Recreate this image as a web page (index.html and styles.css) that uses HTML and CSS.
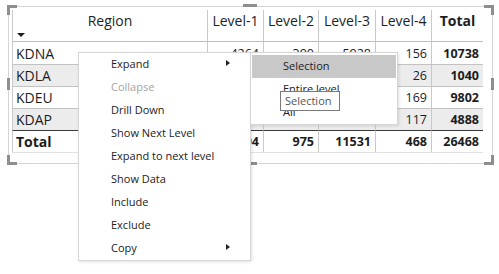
FILE: index.html
```html
<!DOCTYPE html>
<html>
<head>
<meta charset="utf-8">
<link rel="stylesheet" href="styles.css">
</head>
<body>
<div class="stage">
  <div class="visual">
    <div class="matrix">
      <div class="hc first region-h"><span class="h-text">Region</span><span class="sort"></span></div>
      <div class="hc">Level-1</div>
      <div class="hc">Level-2</div>
      <div class="hc">Level-3</div>
      <div class="hc">Level-4</div>
      <div class="hc last bold">Total</div>

      <div class="c first lbl r1">KDNA</div>
      <div class="c num r1">4264</div>
      <div class="c num r1">390</div>
      <div class="c num r1">5928</div>
      <div class="c num r1">156</div>
      <div class="c num last bold r1">10738</div>

      <div class="c first lbl alt">KDLA</div>
      <div class="c num alt">520</div>
      <div class="c num alt">84</div>
      <div class="c num alt">410</div>
      <div class="c num alt">26</div>
      <div class="c num last bold alt">1040</div>

      <div class="c first lbl">KDEU</div>
      <div class="c num">5412</div>
      <div class="c num">301</div>
      <div class="c num">3920</div>
      <div class="c num">169</div>
      <div class="c num last bold">9802</div>

      <div class="c first lbl alt r4">KDAP</div>
      <div class="c num alt r4">3298</div>
      <div class="c num alt r4">200</div>
      <div class="c num alt r4">1273</div>
      <div class="c num alt r4">117</div>
      <div class="c num last bold alt r4">4888</div>

      <div class="c first lbl tot bold">Total</div>
      <div class="c num tot bold">13494</div>
      <div class="c num tot bold">975</div>
      <div class="c num tot bold">11531</div>
      <div class="c num tot bold">468</div>
      <div class="c num last tot bold">26468</div>
    </div>

    <span class="handle h-tl"></span>
    <span class="handle h-tr"></span>
    <span class="handle h-bl"></span>
    <span class="handle h-br"></span>
    <span class="handle h-tm"></span>
    <span class="handle h-bm"></span>
    <span class="handle h-lm"></span>
    <span class="handle h-rm"></span>
  </div>

  <div class="menu">
    <div class="mi">Expand<span class="arrow"></span></div>
    <div class="mi disabled">Collapse</div>
    <div class="mi">Drill Down</div>
    <div class="mi">Show Next Level</div>
    <div class="mi">Expand to next level</div>
    <div class="mi">Show Data</div>
    <div class="mi">Include</div>
    <div class="mi">Exclude</div>
    <div class="mi">Copy<span class="arrow"></span></div>
  </div>

  <div class="submenu">
    <div class="mi sel">Selection</div>
    <div class="mi">Entire level</div>
    <div class="mi">All</div>
  </div>

  <div class="tooltip">Selection</div>
</div>
</body>
</html>
```

FILE: styles.css
```css
html, body {
  margin: 0;
  padding: 0;
  background: #ffffff;
}

body {
  font-family: "Open Sans", "Noto Sans", sans-serif;
  color: #1c1c1c;
}

.stage {
  position: relative;
  width: 499px;
  height: 274px;
  overflow: hidden;
}

.visual {
  position: relative;
  box-sizing: border-box;
  margin: 6px 0 0 8px;
  width: 485px;
  height: 158px;
  border: 1px solid #d5d5d5;
  padding: 3px 0 0 3px;
}

.matrix {
  display: grid;
  grid-template-columns: 196px 56px 55px 57px 56px 51px;
}

.hc {
  box-sizing: border-box;
  height: 32px;
  border-right: 1px solid #c9c9c9;
  border-bottom: 1px solid #95d0c8;
  font-size: 14px;
  line-height: 20px;
  text-align: center;
  padding-top: 1px;
  color: #1e1e1e;
}

.region-h {
  display: flex;
  flex-direction: column;
}

.h-text {
  display: block;
  text-align: center;
}

.sort {
  display: block;
  width: 0;
  height: 0;
  margin: 2px 0 0 4px;
  border-left: 4px solid transparent;
  border-right: 4px solid transparent;
  border-top: 4px solid #1e1e1e;
}

.first {
  border-left: 1px solid #c9c9c9;
}

.last {
  border-right: none;
}

.c {
  box-sizing: border-box;
  height: 22px;
  border-right: 1px solid #c9c9c9;
  border-bottom: 1px solid #c2c2c2;
  display: flex;
  align-items: center;
  white-space: nowrap;
}

.c.last {
  border-right: none;
}

.r1 {
  height: 23px;
}

.r4 {
  height: 21px;
  border-bottom: none;
}

.lbl {
  font-size: 14px;
  padding-left: 3px;
}

.num {
  font-size: 12.5px;
  justify-content: flex-end;
  padding-right: 4px;
}

.alt {
  background: #ececec;
}

.tot {
  height: 23px;
  border-top: 1px solid #3a3a3a;
  border-bottom: 1px solid #e2e2e2;
}

.bold {
  font-weight: 700;
}

.handle {
  position: absolute;
  box-sizing: border-box;
  background: transparent;
  border-color: #8e8e8e;
  border-style: solid;
  border-width: 0;
}

.h-tl { left: -2px; top: -2px; width: 10px; height: 10px; border-top-width: 3px; border-left-width: 3px; }
.h-tr { left: 475px; top: -2px; width: 10px; height: 10px; border-top-width: 3px; border-right-width: 3px; }
.h-bl { left: -2px; top: 148px; width: 10px; height: 10px; border-bottom-width: 3px; border-left-width: 3px; }
.h-br { left: 475px; top: 148px; width: 10px; height: 10px; border-bottom-width: 3px; border-right-width: 3px; }
.h-tm { left: 234px; top: -3px; width: 14px; height: 3px; background: #8e8e8e; }
.h-bm { left: 234px; top: 155px; width: 14px; height: 3px; background: #8e8e8e; }
.h-lm { left: -2px; top: 71px; width: 3px; height: 12px; background: #8e8e8e; }
.h-rm { left: 482px; top: 71px; width: 3px; height: 12px; background: #8e8e8e; }

.menu {
  position: absolute;
  left: 78px;
  top: 52px;
  box-sizing: border-box;
  width: 173px;
  height: 209px;
  background: #ffffff;
  border: 1px solid #d6d6d6;
  box-shadow: 1px 1px 3px rgba(0, 0, 0, 0.12);
}

.mi {
  position: relative;
  box-sizing: border-box;
  height: 23px;
  line-height: 21px;
  font-size: 11px;
  padding-left: 32px;
  color: #222222;
  white-space: nowrap;
}

.mi.disabled {
  color: #a3a3a3;
}

.arrow {
  position: absolute;
  left: 147px;
  top: 7px;
  width: 0;
  height: 0;
  border-top: 3.5px solid transparent;
  border-bottom: 3.5px solid transparent;
  border-left: 4px solid #222222;
}

.submenu {
  position: absolute;
  left: 250px;
  top: 52px;
  box-sizing: border-box;
  width: 148px;
  height: 73px;
  padding: 2px 1px 0 1px;
  background: #ffffff;
  border: 1px solid #d6d6d6;
  box-shadow: 1px 1px 3px rgba(0, 0, 0, 0.12);
}

.submenu .mi {
  padding-left: 31px;
}

.submenu .mi.sel {
  background: #c8c8c8;
}

.tooltip {
  position: absolute;
  left: 280px;
  top: 91px;
  box-sizing: border-box;
  width: 60px;
  height: 20px;
  border: 1px solid #7a7a7a;
  background: #ffffff;
  font-size: 11px;
  line-height: 17px;
  padding-left: 4px;
  color: #555555;
  white-space: nowrap;
}
```
